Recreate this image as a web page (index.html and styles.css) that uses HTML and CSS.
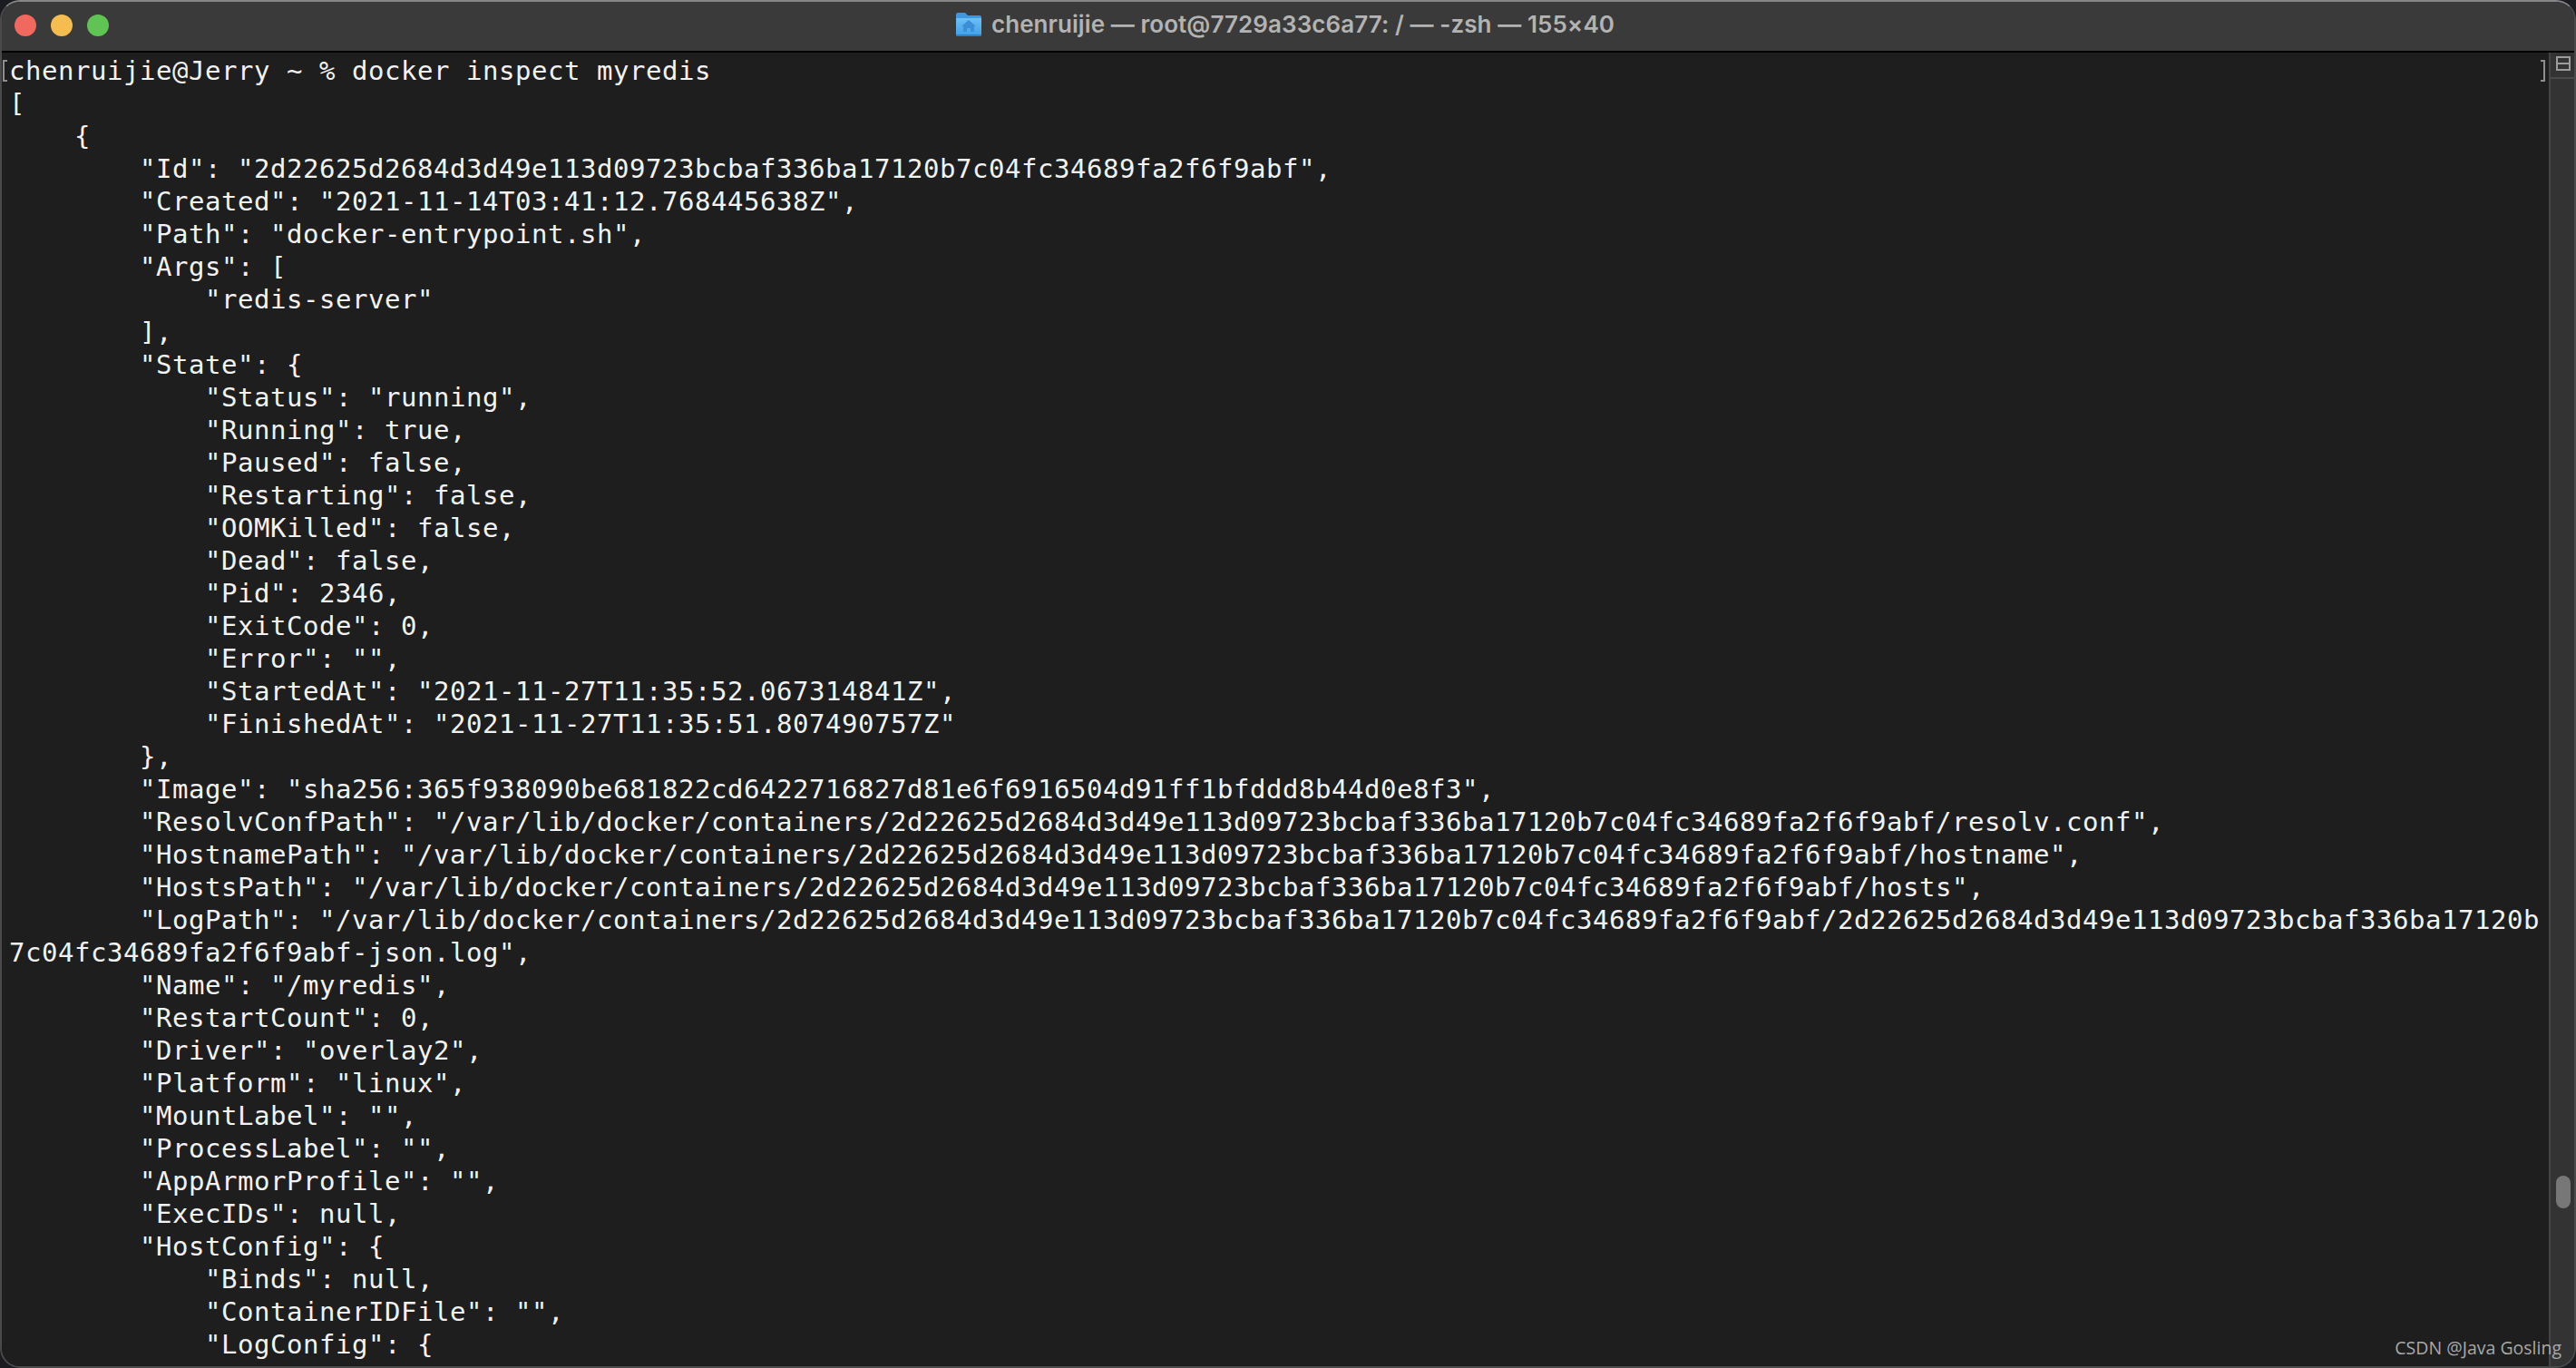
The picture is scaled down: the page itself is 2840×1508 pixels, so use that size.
FILE: index.html
```html
<!DOCTYPE html>
<html lang="en">
<head>
<meta charset="utf-8">
<title>chenruijie — root@7729a33c6a77: / — -zsh — 155×40</title>
<link rel="stylesheet" href="styles.css">
</head>
<body>
<div class="window">
  <header class="titlebar">
    <div class="lights">
      <span class="light red"></span>
      <span class="light yellow"></span>
      <span class="light green"></span>
    </div>
    <div class="title">
      <svg class="folder" viewBox="0 0 28 26" width="28" height="26" aria-hidden="true">
        <defs>
          <linearGradient id="folderFace" x1="0" y1="0" x2="0" y2="1">
            <stop offset="0" stop-color="#6cc0f5"/>
            <stop offset="1" stop-color="#3f9fe8"/>
          </linearGradient>
        </defs>
        <path d="M0 2 Q0 0 2 0 H10 L13 3 H26 Q28 3 28 5 V10 H0 Z" fill="#3f97df"/>
        <path d="M0 6 H28 V24 Q28 26 26 26 H2 Q0 26 0 24 Z" fill="url(#folderFace)"/>
        <path d="M0 24 H28 Q28 26 26 26 H2 Q0 26 0 24 Z" fill="#2f7fc4"/>
        <path d="M14 8 L22 15 H20 V21 H16 V17 H12 V21 H8 V15 H6 Z" fill="#3c8fd6"/>
      </svg>
      <span class="title-text">chenruijie — root@7729a33c6a77: / — -zsh — 155×40</span>
    </div>
  </header>
  <div class="body">
    <main class="terminal">
      <span class="mark mark-left"></span>
      <span class="mark mark-right"></span>
      <div class="output">
        <div class="line">chenruijie@Jerry ~ % docker inspect myredis</div>
        <div class="line">[</div>
        <div class="line">    {</div>
        <div class="line">        "Id": "2d22625d2684d3d49e113d09723bcbaf336ba17120b7c04fc34689fa2f6f9abf",</div>
        <div class="line">        "Created": "2021-11-14T03:41:12.768445638Z",</div>
        <div class="line">        "Path": "docker-entrypoint.sh",</div>
        <div class="line">        "Args": [</div>
        <div class="line">            "redis-server"</div>
        <div class="line">        ],</div>
        <div class="line">        "State": {</div>
        <div class="line">            "Status": "running",</div>
        <div class="line">            "Running": true,</div>
        <div class="line">            "Paused": false,</div>
        <div class="line">            "Restarting": false,</div>
        <div class="line">            "OOMKilled": false,</div>
        <div class="line">            "Dead": false,</div>
        <div class="line">            "Pid": 2346,</div>
        <div class="line">            "ExitCode": 0,</div>
        <div class="line">            "Error": "",</div>
        <div class="line">            "StartedAt": "2021-11-27T11:35:52.067314841Z",</div>
        <div class="line">            "FinishedAt": "2021-11-27T11:35:51.807490757Z"</div>
        <div class="line">        },</div>
        <div class="line">        "Image": "sha256:365f938090be681822cd6422716827d81e6f6916504d91ff1bfddd8b44d0e8f3",</div>
        <div class="line">        "ResolvConfPath": "/var/lib/docker/containers/2d22625d2684d3d49e113d09723bcbaf336ba17120b7c04fc34689fa2f6f9abf/resolv.conf",</div>
        <div class="line">        "HostnamePath": "/var/lib/docker/containers/2d22625d2684d3d49e113d09723bcbaf336ba17120b7c04fc34689fa2f6f9abf/hostname",</div>
        <div class="line">        "HostsPath": "/var/lib/docker/containers/2d22625d2684d3d49e113d09723bcbaf336ba17120b7c04fc34689fa2f6f9abf/hosts",</div>
        <div class="line">        "LogPath": "/var/lib/docker/containers/2d22625d2684d3d49e113d09723bcbaf336ba17120b7c04fc34689fa2f6f9abf/2d22625d2684d3d49e113d09723bcbaf336ba17120b</div>
        <div class="line">7c04fc34689fa2f6f9abf-json.log",</div>
        <div class="line">        "Name": "/myredis",</div>
        <div class="line">        "RestartCount": 0,</div>
        <div class="line">        "Driver": "overlay2",</div>
        <div class="line">        "Platform": "linux",</div>
        <div class="line">        "MountLabel": "",</div>
        <div class="line">        "ProcessLabel": "",</div>
        <div class="line">        "AppArmorProfile": "",</div>
        <div class="line">        "ExecIDs": null,</div>
        <div class="line">        "HostConfig": {</div>
        <div class="line">            "Binds": null,</div>
        <div class="line">            "ContainerIDFile": "",</div>
        <div class="line">            "LogConfig": {</div>
      </div>
    </main>
    <aside class="scrollbar">
      <div class="split-box"><span class="split-icon"></span></div>
      <div class="track"><span class="thumb"></span></div>
    </aside>
  </div>
  <div class="watermark">CSDN @Java Gosling</div>
</div>
</body>
</html>
```
FILE: styles.css
```css
* { box-sizing: border-box; }
html, body { margin: 0; padding: 0; height: 100%; background: #1a1c22; overflow: hidden; }
.window {
  position: relative;
  width: 2840px;
  height: 1508px;
  display: flex;
  flex-direction: column;
  border-radius: 22px;
  overflow: hidden;
  background: #1e1e1e;
  border: 2px solid #4a4a4a;
  border-top-color: #868686;
}
.titlebar {
  position: relative;
  flex: none;
  height: 56px;
  background: #3a3a3a;
  border-bottom: 2px solid #000;
  display: flex;
  align-items: center;
  justify-content: center;
}
.lights { position: absolute; left: 14px; top: 14px; display: flex; gap: 16px; }
.light { width: 24px; height: 24px; border-radius: 50%; }
.red { background: #f0685e; }
.yellow { background: #f5bd4f; }
.green { background: #5fc454; }
.title { display: flex; align-items: center; gap: 11px; margin: 0 6px 5px 0; }
.folder { display: block; }
.title-text { font: 600 26px/32px "Inter", "Liberation Sans", sans-serif; color: #b3b3b3; letter-spacing: 0.08px; }
.body { flex: 1; display: flex; min-height: 0; }
.terminal { position: relative; flex: 1; min-width: 0; padding: 2px 0 0 8px; background: #1e1e1e; }
.output {
  font: 400 29px/36px "DejaVu Sans Mono", monospace;
  letter-spacing: 0.54px;
  color: #f2f2f2;
}
.line { width: fit-content; white-space: pre; }
.mark { position: absolute; top: 8px; width: 5px; height: 24px; border: 2px solid #8e8e8e; }
.mark-left { left: 1px; border-right: 0; }
.mark-right { right: 4px; border-left: 0; }
.scrollbar {
  flex: none;
  width: 28px;
  display: flex;
  flex-direction: column;
  background: #333;
  border-left: 2px solid #444;
}
.split-box { flex: none; height: 29px; padding: 4px 0 0 6px; border-bottom: 2px solid #4a4a4a; }
.split-icon {
  display: block;
  width: 16px;
  height: 16px;
  border: 2px solid #9c9c9c;
  background: linear-gradient(#9c9c9c, #9c9c9c) center / 100% 2px no-repeat;
}
.track { position: relative; flex: 1; }
.thumb { position: absolute; left: 6px; top: 1209px; width: 16px; height: 36px; border-radius: 8px; background: #777; }
.watermark {
  position: absolute;
  right: 14px;
  bottom: 8px;
  font: 400 19.5px/24px "Open Sans", "Noto Sans", sans-serif;
  color: #a8a8a8;
}
```
